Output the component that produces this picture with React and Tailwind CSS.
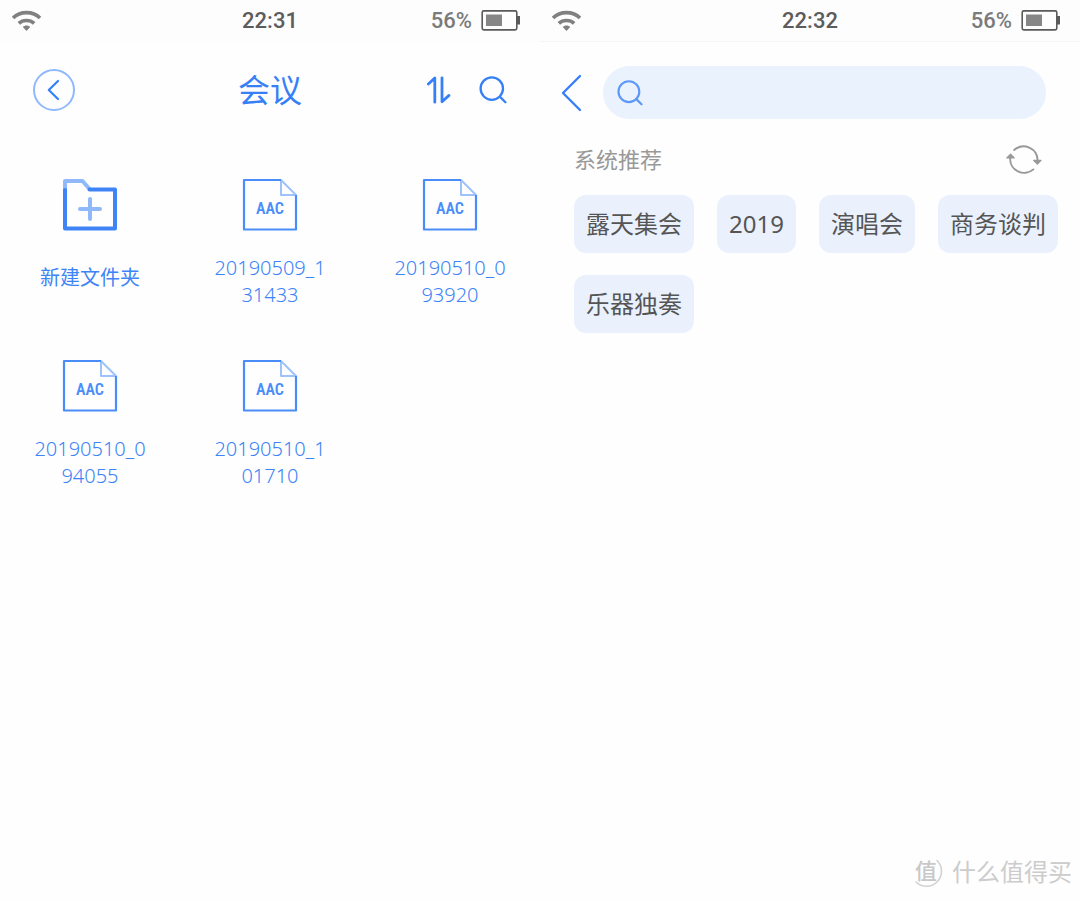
import React, { useState } from 'react';

const FILES = ['20190509_131433', '20190510_093920', '20190510_094055', '20190510_101710'];
const TAGS = ['露天集会', '2019', '演唱会', '商务谈判', '乐器独奏'];

const WifiIcon = () => (
  <svg width="30" height="22" viewBox="0 0 30 22" fill="none" stroke="#808080" strokeWidth="3.6" aria-hidden="true">
    <path d="M1 8 C8 0.8 21 0.8 28 8" />
    <path d="M6.8 13.4 C10.8 9.6 18.2 9.6 22.2 13.4" />
    <path d="M10.8 17 C12.6 15 16.4 15 18.2 17 L14.5 21 Z" fill="#808080" stroke="none" />
  </svg>
);

const BatteryIcon = () => (
  <svg width="40" height="22" viewBox="0 0 40 22" fill="none" aria-hidden="true">
    <rect x="2.2" y="0.9" width="34.6" height="19" rx="1.6" stroke="#5a5a5a" strokeWidth="1.6" />
    <rect x="6" y="4.5" width="16" height="11.5" fill="#868686" />
    <rect x="37" y="6" width="3" height="8.5" fill="#5a5a5a" />
  </svg>
);

const SearchIcon = ({ className }) => (
  <svg className={className} viewBox="0 0 28 28" fill="none" stroke="currentColor" strokeWidth="2.3" strokeLinecap="round" aria-hidden="true">
    <circle cx="12.8" cy="12.6" r="11.2" />
    <path d="M20.8 20.6 L26.4 26.2" />
  </svg>
);

const SortIcon = () => (
  <svg width="24" height="28" viewBox="0 0 24 28" fill="none" stroke="currentColor" strokeWidth="2.8" strokeLinecap="round" strokeLinejoin="round" aria-hidden="true">
    <path d="M1.4 8 L7.8 2 V26.2" />
    <path d="M15 1.8 V25.8 L22 19.4" />
  </svg>
);

const RefreshIcon = () => (
  <svg width="36" height="32" viewBox="0 0 36 32" fill="none" stroke="#999999" strokeWidth="1.9" strokeLinecap="round" aria-hidden="true">
    <path d="M8.2 7 A14 14 0 0 1 31.6 17.4" />
    <path d="M4.2 15 A14 14 0 0 0 27.4 26.4" />
    <path d="M27.6 17.4 H35 L31.4 21.2 Z M0.8 15 H8.2 L4.6 11.2 Z" fill="#999999" strokeLinejoin="round" strokeWidth="1.2" />
  </svg>
);

const FolderIcon = () => (
  <svg width="56" height="54" viewBox="0 0 56 54" fill="none" strokeWidth="4" strokeLinecap="round" strokeLinejoin="round" aria-hidden="true">
    <path d="M3 13 V3 H20.5 L27.5 11" stroke="#8fb9fb" />
    <path d="M28 31 m-10 0 h20 m-10 -10 v20" stroke="#8fb9fb" />
    <path d="M3 12 V50.5 H53 V11.5 H27.5" stroke="#3f84f7" />
  </svg>
);

const FileIcon = () => (
  <svg width="56" height="54" viewBox="0 0 56 54" fill="none" strokeLinejoin="round" aria-hidden="true">
    <path d="M39 2 V17 H54 Z" stroke="#9ec3fc" strokeWidth="2" />
    <path d="M39 2 H2 V51.5 H54 V17" stroke="#4a8df8" strokeWidth="2.2" />
    <text x="28" y="36" textAnchor="middle" fill="#4a8df8"
      className="font-['Roboto_Condensed','Liberation_Sans_Narrow',Roboto,sans-serif] text-[16px] font-semibold">AAC</text>
  </svg>
);

const StatusBar = ({ time, bordered }) => (
  <div className={`grid h-[42px] grid-cols-[1fr_auto_1fr] items-center border-b bg-[#fdfdfd] px-3 font-[Roboto,sans-serif] text-[22px] font-medium ${bordered ? 'border-[#f5f5f5]' : 'border-transparent'}`}>
    <WifiIcon />
    <span className="text-[#5c5c5c]">{time}</span>
    <div className="flex items-center justify-end gap-2 pr-2 text-[#7a7a7a]">
      <span>56%</span>
      <BatteryIcon />
    </div>
  </div>
);

const FolderPage = () => (
  <section>
    <StatusBar time="22:31" />
    <header className="grid h-24 grid-cols-[1fr_auto_1fr] items-center px-[33px] text-[#3680f7]">
      <button type="button" aria-label="返回" className="flex size-[42px] items-center justify-center rounded-full border-2 border-[#8fb9fb]">
        <svg width="14" height="22" viewBox="0 0 14 22" fill="none" stroke="currentColor" strokeWidth="2.2" strokeLinecap="round" strokeLinejoin="round" aria-hidden="true">
          <path d="M11 2 L1.8 11 L11 20" />
        </svg>
      </button>
      <h1 className="text-[32px] leading-10">会议</h1>
      <div className="flex items-center justify-end gap-7">
        <button type="button" aria-label="排序"><SortIcon /></button>
        <button type="button" aria-label="搜索"><SearchIcon className="size-7" /></button>
      </div>
    </header>

    <div className="grid grid-cols-3 gap-y-[51px] pt-10 text-[20px] leading-[27px] text-[#3d84f7]">
      <button type="button" className="flex flex-col items-center gap-8">
        <FolderIcon />
        <span>新建文件夹</span>
      </button>
      {FILES.map(name => (
        <button key={name} type="button" className="flex flex-col items-center gap-[22px]">
          <FileIcon />
          <span className="w-28 break-all font-light">{name}</span>
        </button>
      ))}
    </div>
  </section>
);

const SearchPage = () => {
  const [query, setQuery] = useState('');

  return (
    <section>
      <StatusBar time="22:32" bordered />
      <div className="flex items-center gap-5 pt-6 pr-[34px] pl-[21px]">
        <button type="button" aria-label="返回" className="text-[#3680f7]">
          <svg width="22" height="38" viewBox="0 0 22 38" fill="none" stroke="currentColor" strokeWidth="2.4" strokeLinecap="round" strokeLinejoin="round" aria-hidden="true">
            <path d="M19 2 L2 19 L19 36" />
          </svg>
        </button>
        <label className="flex h-[53px] flex-1 items-center gap-3 rounded-full bg-[#eaf2fd] px-[14px] text-[#5b98f8]">
          <SearchIcon className="size-[26px] shrink-0" />
          <input type="text" aria-label="搜索" value={query} onChange={e => setQuery(e.target.value)}
            className="w-full min-w-0 bg-transparent text-[24px] text-[#555555] outline-none" />
        </label>
      </div>

      <div className="flex items-center justify-between pt-6 pr-[38px] pl-[34px]">
        <h2 className="text-[22px] leading-8 text-[#999999]">系统推荐</h2>
        <button type="button" aria-label="刷新"><RefreshIcon /></button>
      </div>

      <div className="flex flex-wrap gap-x-[23px] gap-y-[22px] pt-5 pr-5 pl-[34px]">
        {TAGS.map(tag => (
          <button key={tag} type="button" onClick={() => setQuery(tag)}
            className="h-[58px] rounded-xl bg-[#eaf1fd] px-3 text-[24px] text-[#555555]">
            {tag}
          </button>
        ))}
      </div>
    </section>
  );
};

const Watermark = () => (
  <div className="absolute right-2 bottom-2 flex items-center gap-2 text-[#cccccc]">
    <svg width="36" height="40" viewBox="-4 -4 36 40" fill="none" aria-hidden="true">
      <path d="M25 4.5 A14.5 14.5 0 0 1 4 26" stroke="#d2d2d2" strokeWidth="1.6" strokeLinecap="round" />
      <text x="14" y="23" textAnchor="middle" fill="#c8c8c8" className="text-[22px] font-medium">值</text>
    </svg>
    <span className="text-[24px] leading-9">什么值得买</span>
  </div>
);

const App = () => (
  <main lang="zh-CN" className="relative grid min-h-screen grid-cols-2 bg-[#fefefe] font-['Noto_Sans','Noto_Sans_CJK_SC',sans-serif]">
    <FolderPage />
    <SearchPage />
    <Watermark />
  </main>
);

export default App;
